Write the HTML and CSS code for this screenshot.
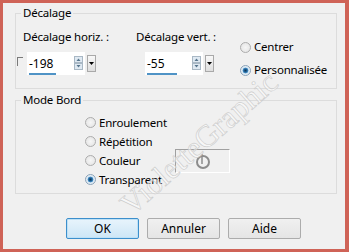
FILE: index.html
```html
<!DOCTYPE html>
<html lang="fr">
<head>
    <meta charset="UTF-8">
    <title>Décalage</title>
    <link rel="stylesheet" href="styles.css">
</head>
<body>
    <div class="dialog">
        <fieldset class="group offset">
            <legend>Décalage</legend>
            <div class="offset-body">
                <div class="field col-h">
                    <label>Décalage horiz. :</label>
                    <div class="field-row">
                        <span class="check"></span>
                        <div class="spin">
                            <div class="spin-box">
                                <div class="spin-top">
                                    <span class="spin-value">-198</span>
                                    <svg class="arrows" width="9" height="14" viewBox="0 0 9 14">
                                        <rect x="0.5" y="0.5" width="8" height="6" fill="#dfe9f2" stroke="#a9b8c5"/>
                                        <rect x="0.5" y="7.5" width="8" height="6" fill="#dfe9f2" stroke="#a9b8c5"/>
                                        <path d="M2.5 5 L4.5 2.5 L6.5 5 Z" fill="#56748c"/>
                                        <path d="M2.5 9 L4.5 11.5 L6.5 9 Z" fill="#56748c"/>
                                    </svg>
                                </div>
                                <div class="spin-bar" style="width: 27px"></div>
                            </div>
                            <div class="drop">
                                <svg width="5" height="3" viewBox="0 0 5 3"><path d="M0 0 H5 L2.5 3 Z" fill="#000"/></svg>
                            </div>
                        </div>
                    </div>
                </div>
                <div class="field col-v">
                    <label>Décalage vert. :</label>
                    <div class="field-row">
                        <div class="spin">
                            <div class="spin-box">
                                <div class="spin-top">
                                    <span class="spin-value">-55</span>
                                    <svg class="arrows" width="9" height="14" viewBox="0 0 9 14">
                                        <rect x="0.5" y="0.5" width="8" height="6" fill="#dfe9f2" stroke="#a9b8c5"/>
                                        <rect x="0.5" y="7.5" width="8" height="6" fill="#dfe9f2" stroke="#a9b8c5"/>
                                        <path d="M2.5 5 L4.5 2.5 L6.5 5 Z" fill="#56748c"/>
                                        <path d="M2.5 9 L4.5 11.5 L6.5 9 Z" fill="#56748c"/>
                                    </svg>
                                </div>
                                <div class="spin-bar" style="width: 30px"></div>
                            </div>
                            <div class="drop">
                                <svg width="5" height="3" viewBox="0 0 5 3"><path d="M0 0 H5 L2.5 3 Z" fill="#000"/></svg>
                            </div>
                        </div>
                    </div>
                </div>
                <div class="position-options">
                    <div class="option"><span class="radio"></span>Centrer</div>
                    <div class="option"><span class="radio on"></span>Personnalisée</div>
                </div>
            </div>
        </fieldset>

        <fieldset class="group border-mode">
            <legend>Mode Bord</legend>
            <div class="mode-list">
                <div class="option row"><span class="radio"></span>Enroulement</div>
                <div class="option row"><span class="radio"></span>Répétition</div>
                <div class="option row">
                    <span class="radio"></span><span class="color-label">Couleur</span>
                    <span class="color-box">
                        <svg width="18" height="18" viewBox="0 0 18 18">
                            <circle cx="9" cy="10" r="6" fill="none" stroke="#8c8c8c" stroke-width="2"/>
                            <path d="M8 2 V12" stroke="#8c8c8c" stroke-width="1.5"/>
                        </svg>
                    </span>
                </div>
                <div class="option row"><span class="radio on"></span>Transparent</div>
            </div>
        </fieldset>

        <div class="buttons">
            <button class="btn default">OK</button>
            <button class="btn">Annuler</button>
            <button class="btn">Aide</button>
        </div>

        <div class="watermark">VioletteGraphic</div>
    </div>
</body>
</html>
```

FILE: styles.css
```css
body {
    margin: 0;
    font-family: "Noto Sans", "Open Sans", sans-serif;
    font-size: 11.5px;
    letter-spacing: -0.2px;
    color: #000;
}
.dialog {
    position: relative;
    width: 349px;
    height: 252px;
    box-sizing: border-box;
    border: 3px solid #cf6357;
    border-right-width: 4px;
    background: #f0f0f0;
    padding: 2px 8px 0 12px;
    overflow: hidden;
}
.group {
    margin: 0;
    border: 1px solid #dcdcdc;
    padding: 8px 0 0 7px;
    box-sizing: border-box;
    min-width: 0;
}
.group legend {
    padding: 0 2px;
    margin-left: -2px;
    line-height: 16px;
}
.offset {
    height: 84px;
}
.border-mode {
    height: 102px;
    margin-top: 3px;
    padding-top: 5px;
}
.offset-body {
    display: flex;
}
.field {
    flex-shrink: 0;
}
.field label {
    display: block;
    line-height: 16px;
}
.col-h {
    width: 113px;
}
.col-v {
    width: 104px;
}
.col-v .field-row {
    padding-left: 9px;
}
.field-row {
    display: flex;
    margin-top: 7px;
}
.check {
    width: 6px;
    height: 9px;
    border-left: 1px solid #7a7a7a;
    border-top: 1px solid #7a7a7a;
    box-sizing: border-box;
    margin: 5px 4px 0 -6px;
}
.spin {
    display: flex;
    align-items: center;
}
.spin-box {
    width: 58px;
    height: 23px;
    background: #fff;
    display: flex;
    flex-direction: column;
}
.spin-top {
    height: 21px;
    display: flex;
    align-items: center;
    justify-content: space-between;
    padding: 0 2px 0 2px;
}
.spin-value {
    font-size: 12px;
    letter-spacing: 0;
    line-height: 16px;
    margin-top: 2px;
}
.spin-bar {
    height: 2px;
    margin-left: 2px;
    background: #4f93c6;
}
.drop {
    width: 9px;
    height: 17px;
    box-sizing: border-box;
    margin-left: 2px;
    border: 1px solid #a9a9a9;
    background: linear-gradient(#f8f8f8, #dedede);
    display: flex;
    align-items: center;
    justify-content: center;
}
.position-options {
    display: flex;
    flex-direction: column;
    gap: 7px;
    padding-top: 10px;
    flex-shrink: 0;
}
.option {
    display: flex;
    align-items: center;
    gap: 3px;
    line-height: 16px;
}
.radio {
    width: 11px;
    height: 11px;
    box-sizing: border-box;
    border-radius: 50%;
    border: 1px solid #acacac;
    background: radial-gradient(circle, #f6f6f6 0, #e6e6e6 5px);
    flex-shrink: 0;
}
.radio.on {
    border-color: #8aa2b8;
    background: radial-gradient(circle, #0d3658 0, #1f5f92 1.5px, #4a94cc 2.6px, #d7e7f3 3.2px, #eef3f7 5px);
}
.mode-list {
    padding-left: 62px;
}
.row {
    height: 19px;
}
.color-label {
    width: 73px;
}
.color-box {
    width: 55px;
    height: 24px;
    margin: -3px 0;
    box-sizing: border-box;
    border-top: 1px solid #a0a0a0;
    border-left: 1px solid #a0a0a0;
    border-bottom: 1px solid #fff;
    border-right: 1px solid #fff;
    display: flex;
    align-items: center;
    justify-content: center;
}
.buttons {
    display: flex;
    gap: 8px;
    margin-top: 24px;
    padding-left: 51px;
}
.btn {
    width: 73px;
    height: 21px;
    padding: 0;
    font-family: inherit;
    font-size: 12px;
    letter-spacing: 0;
    color: #000;
    border: 1px solid #acacac;
    border-radius: 2px;
    background: linear-gradient(#f0f0f0, #e5e5e5);
}
.btn.default {
    border-color: #3c8fcc;
    background: linear-gradient(#e8f4fc, #cde6f6);
    box-shadow: inset 0 0 0 1px #bfe1f6;
}
.watermark {
    position: absolute;
    left: 132px;
    top: 186px;
    font-family: "Liberation Serif", serif;
    font-size: 31px;
    line-height: 31px;
    letter-spacing: 0;
    color: rgba(255, 255, 255, 0.5);
    -webkit-text-stroke: 0.6px #cbcbcb;
    transform: rotate(-41.5deg);
    transform-origin: left bottom;
    pointer-events: none;
    white-space: nowrap;
}
```
